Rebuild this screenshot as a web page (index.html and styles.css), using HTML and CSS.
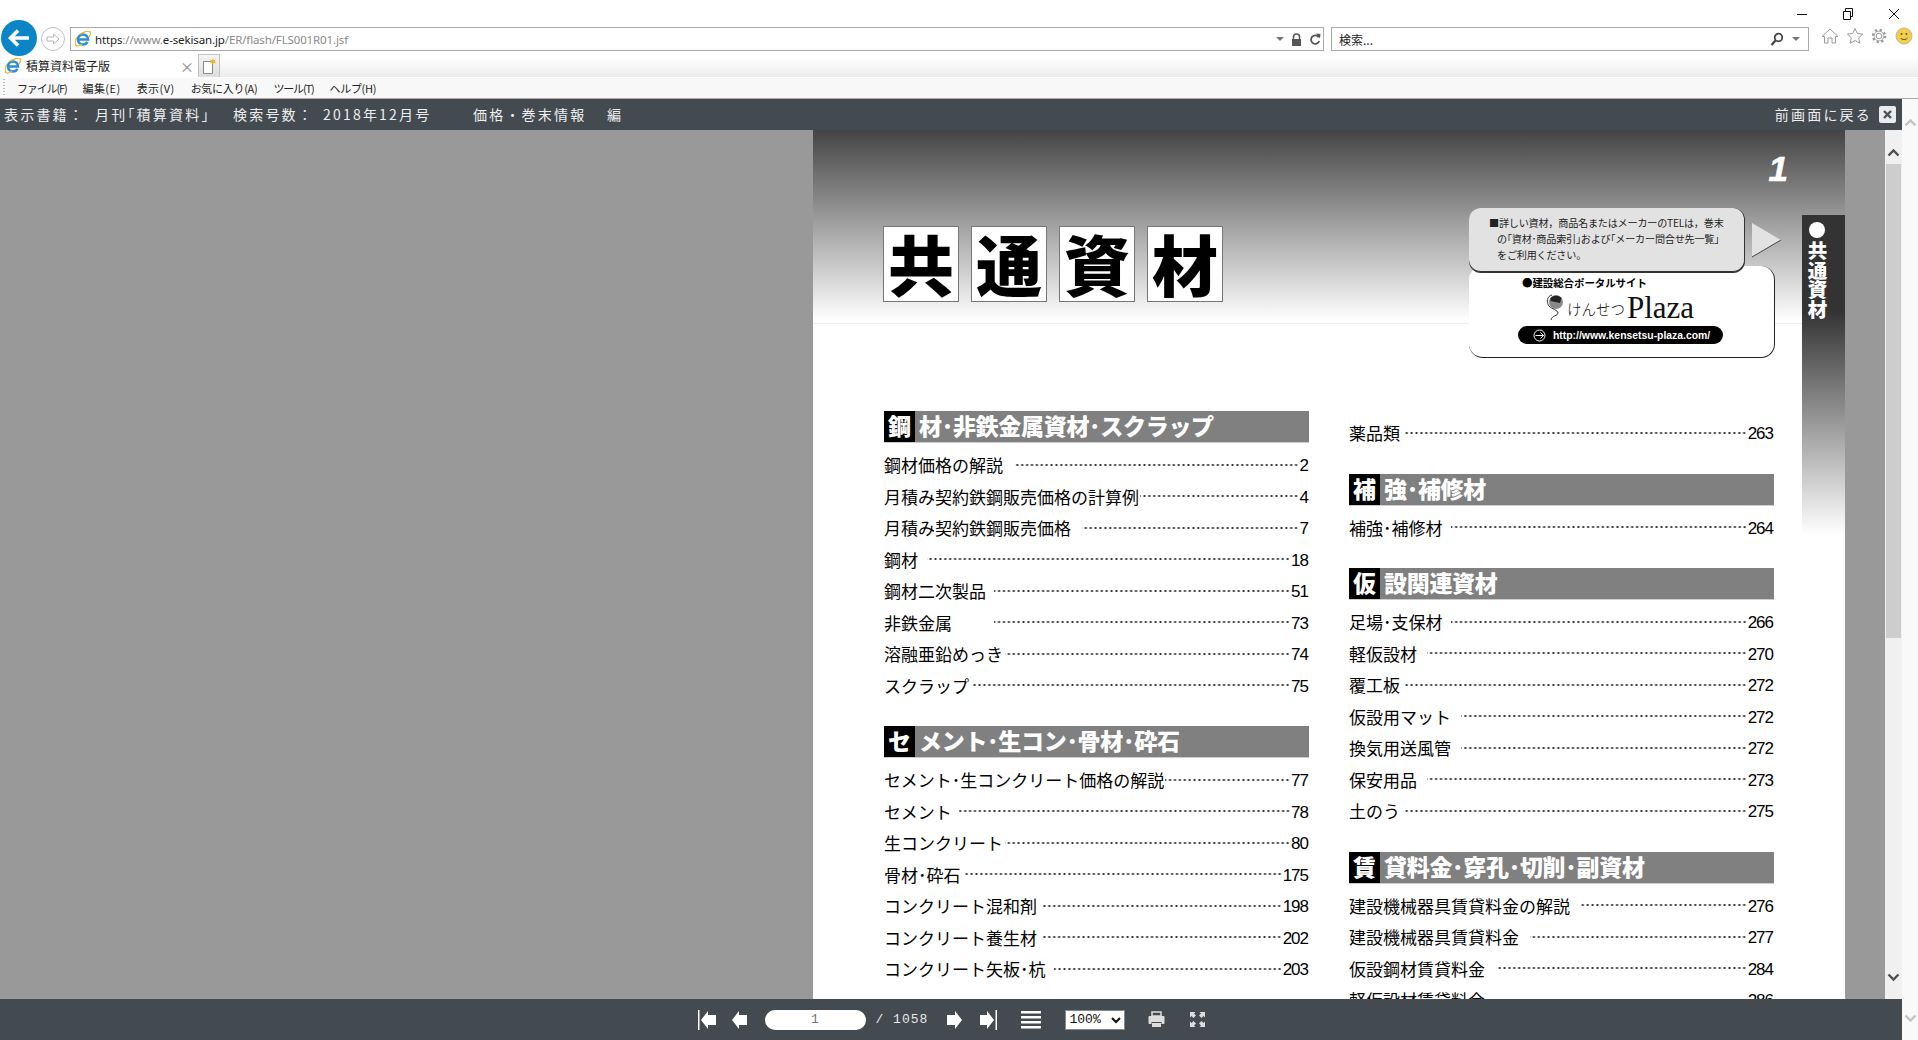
FILE: index.html
```html
<!DOCTYPE html>
<html lang="ja">
<head>
<meta charset="utf-8">
<title>積算資料電子版</title>
<link rel="stylesheet" href="styles.css">
</head>
<body>
<svg class="defs" width="0" height="0" aria-hidden="true">
  <symbol id="ie" viewBox="0 0 16 16">
    <path d="M3 8.500h10c0-3-2-5-5-5s-5 2.200-5 5 2.200 5 5 5c2 0 3.600-1 4.400-2.800" fill="none" stroke="#2a8fd6" stroke-width="2.600"/>
    <path d="M1.800 6.200C.2 9.600-.3 13 1 14.500c1.300 1.200 4-.1 6-1.500M4.500 3.500C8.500.6 13.700-.6 15.200.9c1 1-.1 3.400-1.400 5.200" fill="none" stroke="#f0b429" stroke-width="1.300"/>
  </symbol>
</svg>

<header class="chrome">
  <div class="title-row">
    <span class="win-btn"><svg width="12" height="12" viewBox="0 0 12 12"><path d="M1 6.500h10" stroke="#111" stroke-width="1"/></svg></span>
    <span class="win-btn"><svg width="12" height="12" viewBox="0 0 12 12"><path d="M1.500 3.500h7v8h-7zM3.500 3.500v-3h7v8h-2" fill="none" stroke="#111" stroke-width="1"/></svg></span>
    <span class="win-btn"><svg width="12" height="12" viewBox="0 0 12 12"><path d="M1 1l10 10M11 1L1 11" stroke="#111" stroke-width="1"/></svg></span>
  </div>
  <div class="nav-row">
    <span class="back"><svg width="22" height="18" viewBox="0 0 22 18"><path d="M10 1.500L2.500 9l7.500 7.500M3 9h18" fill="none" stroke="#fff" stroke-width="3.600"/></svg></span>
    <span class="forward"><svg width="14" height="12" viewBox="0 0 14 12"><path d="M1 4h6.500V1L13 6l-5.500 5V8H1z" fill="#fff" stroke="#b5b5b5"/></svg></span>
    <div class="address">
      <svg class="ie-icon" width="16" height="16"><use href="#ie"/></svg>
      <span class="url"><b>https</b>://www.<b>e-sekisan.jp</b>/ER/flash/FLS001R01.jsf</span>
      <span class="caret"></span>
      <svg class="lock" width="11" height="13" viewBox="0 0 11 13"><path d="M2.500 6V4a3 3 0 0 1 6 0v2" fill="none" stroke="#555" stroke-width="1.500"/><rect x="1" y="6" width="9" height="7" fill="#555"/></svg>
      <svg class="refresh" width="12" height="13" viewBox="0 0 12 13"><path d="M9.700 4.200A4.200 4.200 0 1 0 10.200 8" fill="none" stroke="#555" stroke-width="1.800"/><path d="M7 .5l4.500.5-.5 4.500z" fill="#555"/></svg>
    </div>
    <div class="search">
      <span class="search-text">検索...</span>
      <svg class="mag" width="14" height="14" viewBox="0 0 14 14"><circle cx="8.500" cy="5.500" r="3.800" fill="none" stroke="#444" stroke-width="1.800"/><path d="M5.500 8.500L1.500 13" stroke="#444" stroke-width="2.200"/></svg>
      <span class="caret"></span>
    </div>
    <div class="tools">
      <svg width="18" height="18" viewBox="0 0 18 18"><path d="M1 9.500L9 2l8 7.500h-2.500V16h-3.500v-5H7v5H3.500V9.500z" fill="none" stroke="#9a9a9a"/></svg>
      <svg width="18" height="18" viewBox="0 0 18 18"><path d="M9 1.500l2.300 5 5.400.6-4 3.700 1.100 5.400L9 13.500l-4.800 2.700 1.100-5.400-4-3.700 5.400-.6z" fill="none" stroke="#9a9a9a"/></svg>
      <svg width="18" height="18" viewBox="0 0 18 18"><circle cx="9" cy="9" r="2.800" fill="none" stroke="#9a9a9a"/><circle cx="9" cy="9" r="6" fill="none" stroke="#9a9a9a" stroke-width="2.400" stroke-dasharray="2.200 2.500"/><circle cx="9" cy="9" r="4.900" fill="none" stroke="#9a9a9a" stroke-width=".8"/></svg>
      <svg width="18" height="18" viewBox="0 0 18 18"><circle cx="9" cy="9" r="8" fill="#f6cf3f" stroke="#b9b9b9"/><circle cx="6.500" cy="7" r="1" fill="#555"/><circle cx="11.500" cy="7" r="1" fill="#555"/><path d="M5.500 11c1.500 2 5.500 2 7 0" fill="none" stroke="#555"/></svg>
    </div>
  </div>
  <div class="tab-row">
    <div class="tab">
      <svg width="16" height="16"><use href="#ie"/></svg>
      <span class="tab-title">積算資料電子版</span>
      <span class="tab-close">×</span>
    </div>
    <div class="new-tab"><svg width="16" height="17" viewBox="0 0 16 17"><path d="M2.500 3.500h7l2 2v10h-9z" fill="#fff" stroke="#888"/><path d="M12 0l.8 2.200L15 1.500l-1.300 2 1.300 2-2.200-.7L12 7l-.8-2.200-2.200.7 1.300-2-1.300-2 2.200.7z" fill="#f2b01e"/></svg></div>
  </div>
  <nav class="menu-row">
    <span class="grip"></span>
    <span class="menu-item tight">ファイル(F)</span>
    <span class="menu-item wide">編集(E)</span>
    <span class="menu-item wide">表示(V)</span>
    <span class="menu-item">お気に入り(A)</span>
    <span class="menu-item tight">ツール(T)</span>
    <span class="menu-item">ヘルプ(H)</span>
  </nav>
</header>

<div class="content">
  <div class="app">
    <div class="topbar">
      <div class="crumbs">
        <span class="c1">表示書籍：</span>
        <span class="c2">月刊｢積算資料｣</span>
        <span class="c3">検索号数：</span>
        <span class="c4">2018年12月号</span>
        <span class="c5">価格・巻末情報</span>
        <span class="c6">編</span>
      </div>
      <div class="back-link">
        <span>前画面に戻る</span>
        <span class="close-box"><svg width="11" height="11" viewBox="0 0 11 11"><path d="M2 2l7 7M9 2l-7 7" stroke="#4a5056" stroke-width="2.400"/></svg></span>
      </div>
    </div>

    <main class="viewer">
      <div class="side-left"></div>
      <article class="page">
        <div class="page-head">
          <div class="title-boxes">
            <span class="title-box">共</span>
            <span class="title-box">通</span>
            <span class="title-box">資</span>
            <span class="title-box">材</span>
          </div>
          <div class="head-right">
            <div class="page-no">1</div>
            <div class="notice-wrap">
              <p class="notice"><span class="n1">■詳しい資材，商品名またはメーカーのTELは，巻末</span><span class="n2">の｢資材･商品索引｣および｢メーカー問合せ先一覧｣</span><span class="n2">をご利用ください。</span></p>
              <svg class="tri" width="32" height="36" viewBox="0 0 32 36"><path d="M1 1l29 17L1 35z" fill="#e2e2e2"/><path d="M1 35l29-17" stroke="#444" fill="none"/></svg>
            </div>
            <div class="plaza">
              <div class="plaza-top">●建設総合ポータルサイト</div>
              <div class="plaza-logo">
                <svg class="balloon" width="22" height="28" viewBox="0 0 22 28"><circle cx="12" cy="8" r="7" fill="#8a8a8a"/><path d="M6.500 4a8 8 0 0 1 11 0L16 9 6.500 7z" fill="#222"/><path d="M8 1C3 2 2 8 5 12c2.500 3 9 4 9 7s-6 2-7 7" fill="none" stroke="#333"/></svg>
                <span class="kana">けんせつ</span><span class="plaza-word">Plaza</span>
              </div>
              <div class="plaza-url">
                <svg width="13" height="13" viewBox="0 0 13 13"><circle cx="6.500" cy="6.500" r="5.500" fill="none" stroke="#fff"/><path d="M2.500 6.500h8M7.500 3.500l3 3-3 3" fill="none" stroke="#fff"/></svg>
                <span>http://www.kensetsu-plaza.com/</span>
              </div>
            </div>
          </div>
        </div>

        <div class="side-tab"><span class="dot"></span><span class="tab-word">共通資材</span></div>

        <div class="columns">
          <div class="col">
            <section class="section">
              <h2 class="sec-head"><span class="sec-key">鋼</span><span class="sec-name">材･非鉄金属資材･スクラップ</span></h2>
              <div class="row"><span>鋼材価格の解説</span><span class="dots m11"></span><span class="num">2</span></div>
              <div class="row"><span>月積み契約鉄鋼販売価格の計算例</span><span class="dots m1"></span><span class="num">4</span></div>
              <div class="row"><span>月積み契約鉄鋼販売価格</span><span class="dots m11"></span><span class="num">7</span></div>
              <div class="row"><span>鋼材</span><span class="dots m9"></span><span class="num">18</span></div>
              <div class="row"><span>鋼材二次製品</span><span class="dots m8"></span><span class="num">51</span></div>
              <div class="row"><span>非鉄金属</span><span class="dots m42"></span><span class="num">73</span></div>
              <div class="row"><span>溶融亜鉛めっき</span><span class="dots m2"></span><span class="num">74</span></div>
              <div class="row"><span>スクラップ</span><span class="dots m3"></span><span class="num">75</span></div>
            </section>
            <section class="section">
              <h2 class="sec-head"><span class="sec-key">セ</span><span class="sec-name">メント･生コン･骨材･砕石</span></h2>
              <div class="row"><span>セメント･生コンクリート価格の解説</span><span class="dots m1"></span><span class="num">77</span></div>
              <div class="row"><span>セメント</span><span class="dots m7"></span><span class="num">78</span></div>
              <div class="row"><span>生コンクリート</span><span class="dots m2"></span><span class="num">80</span></div>
              <div class="row"><span>骨材･砕石</span><span class="dots m3"></span><span class="num">175</span></div>
              <div class="row"><span>コンクリート混和剤</span><span class="dots m6"></span><span class="num">198</span></div>
              <div class="row"><span>コンクリート養生材</span><span class="dots m6"></span><span class="num">202</span></div>
              <div class="row"><span>コンクリート矢板･杭</span><span class="dots m8"></span><span class="num">203</span></div>
            </section>
          </div>
          <div class="col col-right">
            <section class="section">
              <div class="row"><span>薬品類</span><span class="dots m5"></span><span class="num">263</span></div>
            </section>
            <section class="section">
              <h2 class="sec-head"><span class="sec-key">補</span><span class="sec-name">強･補修材</span></h2>
              <div class="row"><span>補強･補修材</span><span class="dots m8"></span><span class="num">264</span></div>
            </section>
            <section class="section">
              <h2 class="sec-head"><span class="sec-key">仮</span><span class="sec-name">設関連資材</span></h2>
              <div class="row"><span>足場･支保材</span><span class="dots m8"></span><span class="num">266</span></div>
              <div class="row"><span>軽仮設材</span><span class="dots m10"></span><span class="num">270</span></div>
              <div class="row"><span>覆工板</span><span class="dots m5"></span><span class="num">272</span></div>
              <div class="row"><span>仮設用マット</span><span class="dots m10"></span><span class="num">272</span></div>
              <div class="row"><span>換気用送風管</span><span class="dots m10"></span><span class="num">272</span></div>
              <div class="row"><span>保安用品</span><span class="dots m10"></span><span class="num">273</span></div>
              <div class="row"><span>土のう</span><span class="dots m5"></span><span class="num">275</span></div>
            </section>
            <section class="section">
              <h2 class="sec-head"><span class="sec-key">賃</span><span class="sec-name">貸料金･穿孔･切削･副資材</span></h2>
              <div class="row"><span>建設機械器具賃貸料金の解説</span><span class="dots m11"></span><span class="num">276</span></div>
              <div class="row"><span>建設機械器具賃貸料金</span><span class="dots m11"></span><span class="num">277</span></div>
              <div class="row"><span>仮設鋼材賃貸料金</span><span class="dots m11"></span><span class="num">284</span></div>
              <div class="row"><span>軽仮設材賃貸料金</span><span class="dots m11"></span><span class="num">286</span></div>
            </section>
          </div>
        </div>
      </article>
      <div class="side-right"></div>
      <div class="inner-scroll">
        <svg class="arrow" width="13" height="9" viewBox="0 0 13 9"><path d="M1.500 7.500l5-5 5 5" fill="none" stroke="#505050" stroke-width="2.400"/></svg>
        <div class="thumb"></div>
        <svg class="arrow arrow-down" width="13" height="9" viewBox="0 0 13 9"><path d="M1.500 1.500l5 5 5-5" fill="none" stroke="#505050" stroke-width="2.400"/></svg>
      </div>
    </main>

    <footer class="bottombar">
      <svg class="ic-first" width="18" height="20" viewBox="0 0 18 20"><path d="M0 0h1.500v20H0zM3 10l7-9v4h8v10h-8v4z" fill="#fff"/></svg>
      <svg class="ic-prev" width="15" height="20" viewBox="0 0 15 20"><path d="M0 10l7-9v4h8v10H7v4z" fill="#fff"/></svg>
      <input class="page-input" type="text" value="1" readonly>
      <span class="page-total">/ 1058</span>
      <svg class="ic-next" width="15" height="20" viewBox="0 0 15 20"><path d="M15 10L8 1v4H0v10h8v4z" fill="#fff"/></svg>
      <svg class="ic-last" width="17" height="20" viewBox="0 0 17 20"><path d="M17 0h-1.500v20H17zM14 10L7 1v4H0v10h7v4z" fill="#fff"/></svg>
      <svg class="ic-list" width="20" height="18" viewBox="0 0 20 18"><path d="M0 0h20v2.500H0zM0 5h20v2.500H0zM0 10h20v2.500H0zM0 15h20v2.500H0z" fill="#fff"/></svg>
      <select class="zoom-select"><option>100%</option></select>
      <svg class="ic-print" width="17" height="17" viewBox="0 0 17 17"><path d="M4 1h9v4H4z" fill="none" stroke="#ddd" stroke-width="1.500"/><path d="M1.500 5h14q1 0 1 1v6q0 1-1 1h-2v-2H3.500v2h-2q-1 0-1-1V6q0-1 1-1z" fill="#ddd"/><path d="M4 12h9v4H4z" fill="#ddd"/></svg>
      <svg class="ic-full" width="15" height="15" viewBox="0 0 15 15"><path d="M0 0h5.500L4 1.500 6 3.500 3.500 6 1.500 4 0 5.500zM15 0v5.500L13.500 4 11.500 6 9 3.500 11 1.500 9.500 0zM0 15V9.500L1.500 11 3.500 9 6 11.500 4 13.500 5.500 15zM15 15H9.500L11 13.500 9 11.500 11.500 9 13.500 11 15 9.500z" fill="#ddd"/></svg>
    </footer>
  </div>
  <div class="outer-scroll">
    <svg width="13" height="9" viewBox="0 0 13 9"><path d="M1.500 7.500l5-5 5 5" fill="none" stroke="#c4c4c4" stroke-width="2.400"/></svg>
    <svg width="13" height="9" viewBox="0 0 13 9"><path d="M1.500 1.500l5 5 5-5" fill="none" stroke="#c4c4c4" stroke-width="2.400"/></svg>
  </div>
</div>
</body>
</html>
```

FILE: styles.css
```css
* { box-sizing: border-box; }
html, body { margin: 0; height: 100%; }
body {
  width: 1918px;
  height: 1040px;
  overflow: hidden;
  display: flex;
  flex-direction: column;
  background: #fff;
  color: #111;
  font-family: "Noto Sans CJK JP", "Noto Sans", sans-serif;
}
.defs { position: absolute; }

/* browser chrome */
.chrome { flex: none; height: 99px; display: flex; flex-direction: column; }
.title-row { height: 27px; display: flex; justify-content: flex-end; align-items: flex-start; padding: 8px 18px 0 0; gap: 34px; }
.win-btn { width: 12px; height: 12px; display: block; line-height: 0; }
.nav-row { height: 27px; display: flex; align-items: flex-start; padding-left: 1px; }
.back { width: 36px; height: 36px; margin-top: -7px; border-radius: 50%; background: #0b85c6; display: flex; align-items: center; justify-content: center; flex: none; position: relative; }
.forward { width: 24px; height: 24px; margin: 0 5px 0 4px; border: 1px solid #c0c0c0; border-radius: 50%; display: flex; align-items: center; justify-content: center; flex: none; }
.address { width: 1254px; height: 24px; border: 1px solid #aaa; display: flex; align-items: center; padding: 0 2px 0 4px; flex: none; }
.ie-icon { flex: none; }
.url { margin-left: 4px; flex: 1; font-family: "Noto Sans", sans-serif; font-size: 11.500px; letter-spacing: -.13px; color: #8a8a8a; white-space: nowrap; }
.url b { font-weight: 400; color: #222; }
.caret { width: 0; height: 0; border: 4px solid transparent; border-top: 4px solid #777; border-bottom: 0; flex: none; }
.lock { margin-left: 7px; flex: none; }
.refresh { margin-left: 7px; flex: none; }
.search { width: 478px; height: 24px; margin-left: 7px; border: 1px solid #aaa; display: flex; align-items: center; padding: 0 8px 0 7px; flex: none; }
.search-text { flex: 1; font-size: 12px; color: #222; }
.mag { margin-right: 8px; }
.tools { display: flex; gap: 6.500px; margin-left: 12px; }
.tab-row { height: 23px; display: flex; background: linear-gradient(#fff 10%, #ececec); }
.tab { width: 198px; height: 23px; background: #fff; display: flex; align-items: center; padding: 0 3px 0 5px; }
.tab-title { margin-left: 5px; flex: 1; font-size: 12px; color: #222; }
.tab-close { font-size: 14px; line-height: 1; color: #8c8c8c; margin-right: 1px; }
.new-tab { width: 22px; height: 23px; border: 1px solid #c4c4c4; border-bottom: 0; background: linear-gradient(#f4f4f4, #dedede); display: flex; align-items: center; justify-content: center; }
.menu-row { height: 22px; display: flex; align-items: center; background: #f8f8f8; border-top: 1px solid #fff; border-bottom: 1px solid #aaa; padding-left: 3px; }
.grip { width: 2px; height: 18px; margin-right: 12px; background: repeating-linear-gradient(#bbb 0 1px, transparent 1px 3px); }
.menu-item { font-size: 11px; letter-spacing: -.3px; color: #222; margin-right: 16px; white-space: nowrap; }
.menu-item.tight { letter-spacing: -1.150px; }
.menu-item.wide { letter-spacing: .45px; }

/* layout */
.content { flex: 1; min-height: 0; display: flex; }
.app { width: 1902px; display: flex; flex-direction: column; }
.outer-scroll { width: 16px; background: #f9f9f9; display: flex; flex-direction: column; justify-content: space-between; align-items: center; padding: 19px 0 17px; }

/* top bar */
.topbar { flex: none; height: 31px; padding: 0 6px 2px 4px; background: #434a50; color: #eceeef; display: flex; align-items: center; justify-content: space-between; font-size: 14px; letter-spacing: 2.200px; }
.crumbs { display: flex; white-space: nowrap; }
.c1 { width: 91px; }
.c2 { width: 138px; }
.c3 { width: 90px; }
.c4 { width: 150px; }
.c5 { width: 134px; }
.back-link { display: flex; align-items: center; gap: 7px; }
.close-box { width: 17px; height: 17px; margin-top: 2px; background: #e9ebee; border-radius: 2px; display: flex; align-items: center; justify-content: center; }

/* viewer */
.viewer { flex: 1; min-height: 0; display: flex; overflow: hidden; background: #999; }
.side-left { width: 813px; flex: none; background: #999; }
.side-right { width: 40px; flex: none; background: #999; }
.page { width: 1032px; flex: none; position: relative; overflow: hidden; background: #fff; padding-left: 71px; }
.page-head { position: absolute; left: 0; top: 0; width: 100%; height: 194px; background: linear-gradient(#444, #fff 99%); border-bottom: 1px solid #eee; display: flex; justify-content: space-between; padding: 96px 70px 0 70px; }
.title-boxes { display: flex; gap: 12px; }
.title-box { width: 76px; height: 76px; background: #fff; border: 1px solid #777; color: #000; font-size: 66px; font-weight: 900; line-height: 70px; text-align: center; }
.head-right { width: 314px; margin-top: -77px; margin-right: -8px; color: #222; }
.page-no { height: 59px; margin-right: -5px; text-align: right; font-family: "Liberation Sans", sans-serif; font-weight: 700; font-style: italic; font-size: 35px; line-height: 40px; color: #fff; -webkit-text-stroke: .6px #fff; }
.notice-wrap { display: flex; align-items: center; gap: 6px; position: relative; z-index: 1; }
.notice { width: 278px; height: 64px; margin: 0; padding: 7px 0 0 20px; background: #e2e2e2; border-radius: 12px; border-bottom: 1px solid #333; border-right: 1px solid #333; box-shadow: 0 1px 0 #333; font-size: 10.100px; line-height: 16px; letter-spacing: -.2px; white-space: nowrap; }
.notice span { display: block; }
.n2 { margin-left: 8px; }
.tri { flex: none; }
.plaza { width: 306px; height: 92px; margin-top: -6px; background: #fff; border-radius: 14px; border-right: 1px solid #222; border-bottom: 1px solid #222; padding-top: 8px; position: relative; }
.plaza-top { margin-left: 53px; margin-top: 1px; font-size: 10.500px; line-height: 16px; font-weight: 700; color: #000; white-space: nowrap; letter-spacing: -.1px; }
.plaza-logo { margin-left: 75px; height: 30px; margin-top: 2px; display: flex; align-items: center; white-space: nowrap; color: #111; }
.balloon { flex: none; margin-right: 1px; }
.kana { font-size: 14.500px; font-weight: 300; }
.plaza-word { margin-left: 2px; font-family: "Liberation Serif", serif; font-size: 31px; line-height: 30px; }
.plaza-url { width: 205px; height: 18px; margin: 3px 0 0 49px; background: #000; border-radius: 9px; color: #fff; display: flex; align-items: center; font-family: "Liberation Sans", sans-serif; font-size: 10.400px; font-weight: 700; padding-left: 15px; gap: 7px; white-space: nowrap; }
.plaza-url svg { flex: none; }
.side-tab { position: absolute; right: 0; top: 85px; width: 43px; height: 320px; background: linear-gradient(#333 30%, #fff); color: #fff; padding: 7px 0 0 5px; display: flex; flex-direction: column; align-items: flex-start; }
.tab-word { width: 20px; writing-mode: vertical-rl; font-size: 19.500px; font-weight: 900; line-height: 20px; }
.side-tab .dot { width: 16px; height: 16px; margin: 0 0 3px 2px; border-radius: 50%; background: #fff; }

/* contents */
.columns { position: relative; display: flex; gap: 40px; padding-top: 281px; }
.col { width: 425px; flex: none; }
.col-right { padding-top: 7px; }
.section { margin-bottom: 24px; }
.sec-head { margin: 0 0 7px; height: 32px; display: flex; background: #808080; border-bottom: 1px solid #ccc; color: #fff; font-size: 23px; font-weight: 900; line-height: 28px; white-space: nowrap; letter-spacing: -.3px; }
.sec-key { width: 31px; height: 31px; background: #000; text-align: center; flex: none; letter-spacing: 0; }
.sec-name { margin-left: 4px; }
.row { height: 31.500px; padding-bottom: 2px; display: flex; align-items: center; font-size: 17px; color: #000; white-space: nowrap; }
.dots { flex: 1; height: 4px; margin-right: 1px; background: radial-gradient(circle at center, #333 .9px, transparent 1.300px) right center / 4.900px 4px repeat-x; }
.m1 { margin-left: 1px; }
.m2 { margin-left: 2px; }
.m3 { margin-left: 3px; }
.m5 { margin-left: 5px; }
.m6 { margin-left: 6px; }
.m7 { margin-left: 7px; }
.m8 { margin-left: 8px; }
.m9 { margin-left: 9px; }
.m10 { margin-left: 10px; }
.m11 { margin-left: 11px; }
.m42 { margin-left: 42px; }
.num { font-family: "Liberation Sans", sans-serif; font-size: 17px; letter-spacing: -1px; margin-right: 1px; margin-top: 3px; }

/* inner scrollbar */
.inner-scroll { width: 17px; flex: none; background: #f0f0f0; display: flex; flex-direction: column; align-items: center; position: relative; padding-top: 18px; }
.thumb { width: 15px; height: 474px; margin-top: 7px; background: #cdcdcd; }
.arrow-down { position: absolute; bottom: 17px; left: 2px; }

/* bottom bar */
.bottombar { flex: none; height: 41px; background: #434a50; color: #e8e8e8; display: flex; align-items: center; justify-content: center; }
.ic-prev { margin-left: 16px; }
.page-input { width: 101px; height: 20px; margin-left: 18px; border: 0; border-radius: 10px; background: #fff; color: #777; text-align: center; font-family: "Liberation Mono", monospace; font-size: 13px; padding: 0; outline: 0; }
.page-total { margin-left: 10px; width: 71px; font-family: "Liberation Mono", monospace; font-size: 13px; letter-spacing: 1px; white-space: nowrap; }
.ic-last { margin-left: 18px; }
.ic-list { margin-left: 24px; }
.zoom-select { width: 60px; height: 20px; margin-left: 24px; font-family: "Liberation Mono", monospace; font-size: 13px; background: #fff; color: #111; border: 1px solid #888; border-radius: 0; padding: 0; outline: 0; }
.ic-print { margin-left: 23px; }
.ic-full { margin-left: 25px; }
```
